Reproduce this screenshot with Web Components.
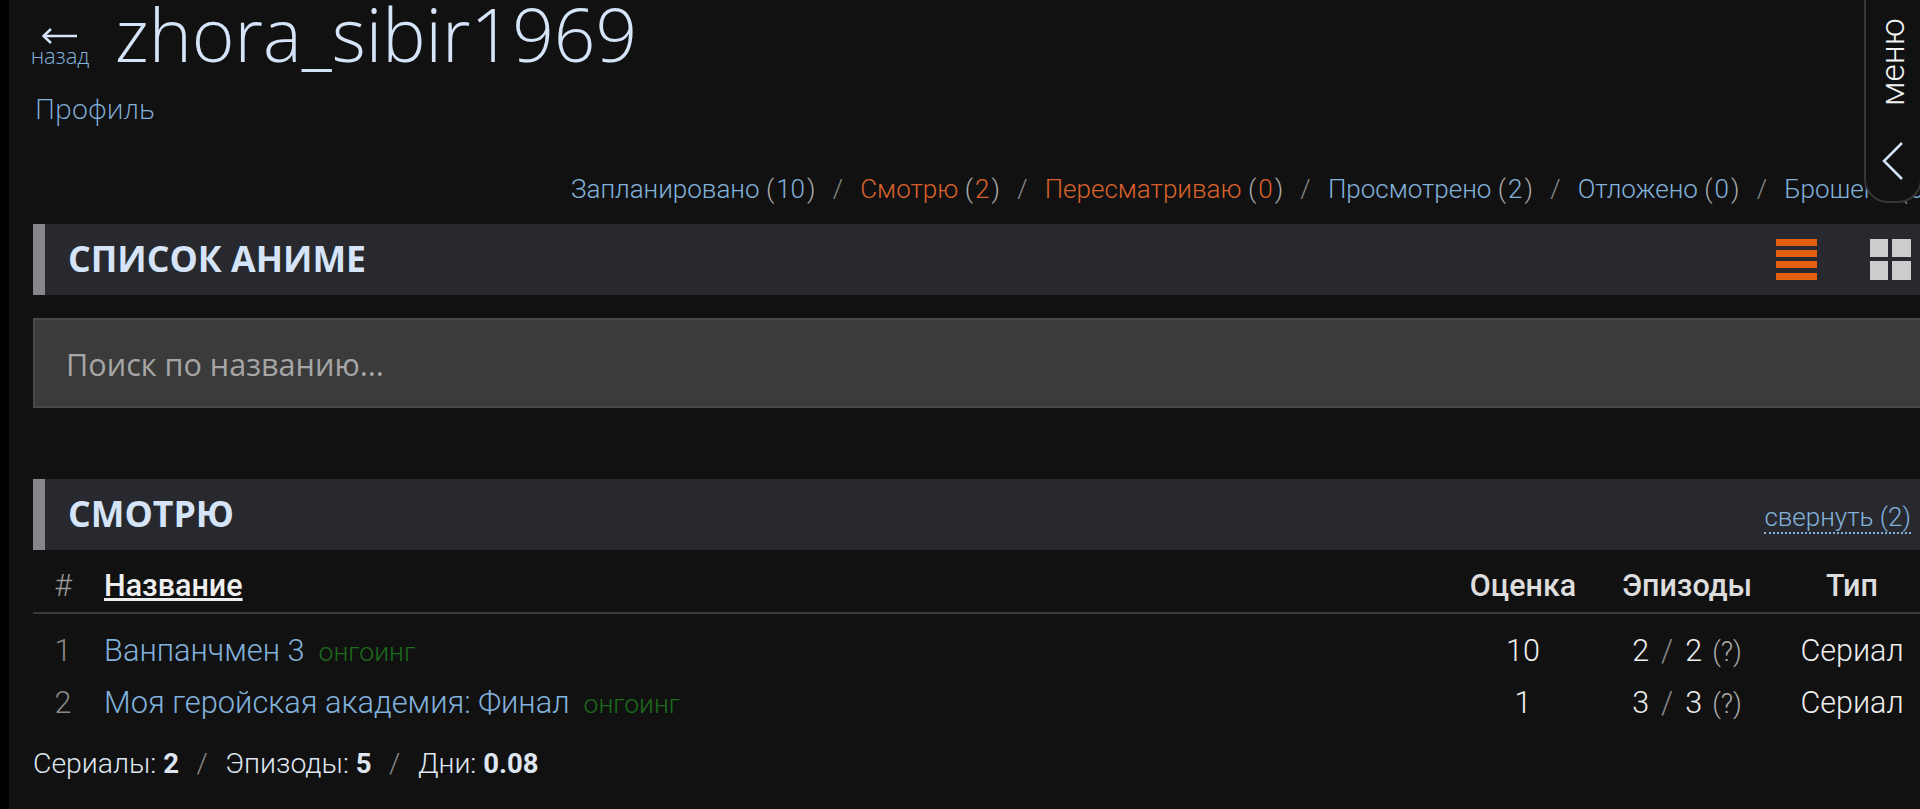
<!DOCTYPE html>
<html lang="ru">
<head>
<meta charset="utf-8">
<title>zhora_sibir1969</title>
<style>
  html, body { margin: 0; height: 100%; overflow: hidden; background: #111; }
  body { font-family: Roboto, "Liberation Sans", sans-serif; font-weight: 300; color: #eee; }
</style>
</head>
<body>
<anime-page>
  <profile-header name="zhora_sibir1969" back="назад" link="Профиль"></profile-header>
  <status-tabs>
    <status-tab count="10">Запланировано</status-tab>
    <status-tab count="2" active>Смотрю</status-tab>
    <status-tab count="0" active>Пересматриваю</status-tab>
    <status-tab count="2">Просмотрено</status-tab>
    <status-tab count="0">Отложено</status-tab>
    <status-tab count="0">Брошено</status-tab>
  </status-tabs>
  <section-bar title="Список аниме"><view-switch></view-switch></section-bar>
  <search-box>Поиск по названию...</search-box>
  <section-bar title="Смотрю" class="second"><collapse-link>свернуть (2)</collapse-link></section-bar>
  <anime-table>
    <anime-row num="1" name="Ванпанчмен 3" score="10" seen="2" total="2"></anime-row>
    <anime-row num="2" name="Моя геройская академия: Финал" score="1" seen="3" total="3"></anime-row>
  </anime-table>
  <list-stats></list-stats>
  <side-menu></side-menu>
</anime-page>

<script>
class AnimePage extends HTMLElement {
  constructor() {
    super();
    this.attachShadow({ mode: 'open' }).innerHTML = `
      <style>
        :host {
          display: block;
          position: relative;
          box-sizing: border-box;
          height: 809px;
          overflow: hidden;
          padding-left: 33px;
          background: #111;
        }
        .strip {
          position: absolute;
          left: 0;
          top: 0;
          bottom: 0;
          width: 9px;
          background: #000;
        }
      </style>
      <div class="strip"></div>
      <slot></slot>
    `;
  }
}

class ProfileHeader extends HTMLElement {
  constructor() {
    super();
    this.attachShadow({ mode: 'open' }).innerHTML = `
      <style>
        :host {
          display: block;
          height: 160px;
          font-family: "Open Sans", sans-serif;
          font-weight: 300;
        }
        .top {
          display: flex;
          align-items: flex-start;
          height: 87px;
        }
        .back {
          display: flex;
          flex-direction: column;
          align-items: center;
          width: 60px;
          margin-left: -3px;
          margin-top: 28px;
          color: #82b1dc;
          font-size: 22px;
          font-weight: 300;
          line-height: 22px;
        }
        .back svg { display: block; }
        h1 {
          margin: 0 0 0 25px;
          font-size: 73px;
          font-weight: 300;
          line-height: 68px;
          color: #d5e4f8;
        }
        .link {
          display: block;
          margin-left: 2px;
          color: #82b1dc;
          font-size: 28px;
          line-height: 42px;
        }
      </style>
      <div class="top">
        <div class="back">
          <svg width="36" height="16" viewBox="0 0 36 16" fill="none" stroke="#d5e4f8" stroke-width="2.5">
            <path d="M1 8H35M9 1L1.5 8L9 15"/>
          </svg>
          <span id="back"></span>
        </div>
        <h1 id="name"></h1>
      </div>
      <a class="link" id="link"></a>
    `;
  }

  connectedCallback() {
    this.shadowRoot.querySelector('#back').textContent = this.getAttribute('back');
    this.shadowRoot.querySelector('#name').textContent = this.getAttribute('name');
    this.shadowRoot.querySelector('#link').textContent = this.getAttribute('link');
  }
}

class StatusTabs extends HTMLElement {
  constructor() {
    super();
    this.attachShadow({ mode: 'open' }).innerHTML = `
      <style>
        :host {
          display: flex;
          height: 64px;
          padding-left: 538px;
          white-space: nowrap;
          font-size: 26px;
          line-height: 58px;
        }
      </style>
      <slot></slot>
    `;
  }
}

class StatusTab extends HTMLElement {
  constructor() {
    super();
    this.attachShadow({ mode: 'open' }).innerHTML = `
      <style>
        :host { display: inline-block; color: #82b1dc; }
        :host([active]) { color: #d9622b; }
        .paren { color: #aaa; }
        #count { margin: 0 2px; }
        .slash { color: #888; margin: 0 17.2px; }
        :host(:last-child) .slash { display: none; }
      </style>
      <slot></slot> <span class="paren">(</span><span id="count"></span><span class="paren">)</span><span class="slash">/</span>
    `;
  }

  connectedCallback() {
    this.shadowRoot.querySelector('#count').textContent = this.getAttribute('count');
  }
}

class SectionBar extends HTMLElement {
  constructor() {
    super();
    this.attachShadow({ mode: 'open' }).innerHTML = `
      <style>
        :host {
          display: flex;
          align-items: center;
          justify-content: space-between;
          box-sizing: border-box;
          height: 71px;
          padding: 0 9px 0 23px;
          background: #28292e;
          border-left: 12px solid #85878b;
        }
        :host(.second) { margin-top: 71px; }
        h2 {
          margin: -3px 0 0;
          font-family: "Open Sans", sans-serif;
          font-size: 35.7px;
          font-weight: 700;
          text-transform: uppercase;
          color: #d5e4f8;
        }
      </style>
      <h2 id="title"></h2>
      <slot></slot>
    `;
  }

  connectedCallback() {
    this.shadowRoot.querySelector('#title').textContent = this.getAttribute('title');
  }
}

class ViewSwitch extends HTMLElement {
  constructor() {
    super();
    this.attachShadow({ mode: 'open' }).innerHTML = `
      <style>
        :host { display: flex; gap: 53px; }
        svg { display: block; }
      </style>
      <svg width="41" height="41" viewBox="0 0 41 41" fill="#e55f10">
        <rect y="0" width="41" height="7"/>
        <rect y="11" width="41" height="7"/>
        <rect y="22" width="41" height="7"/>
        <rect y="34" width="41" height="7"/>
      </svg>
      <svg width="41" height="41" viewBox="0 0 41 41" fill="#ccc">
        <rect x="0" y="0" width="18" height="18"/>
        <rect x="22" y="0" width="19" height="18"/>
        <rect x="0" y="22" width="18" height="19"/>
        <rect x="22" y="22" width="19" height="19"/>
      </svg>
    `;
  }
}

class CollapseLink extends HTMLElement {
  constructor() {
    super();
    this.attachShadow({ mode: 'open' }).innerHTML = `
      <style>
        :host {
          display: block;
          margin-top: 7px;
          color: #82b1dc;
          font-size: 26px;
          line-height: 30px;
          border-bottom: 2px dotted #82b1dc;
        }
      </style>
      <slot></slot>
    `;
  }
}

class SearchBox extends HTMLElement {
  constructor() {
    super();
    this.attachShadow({ mode: 'open' }).innerHTML = `
      <style>
        :host {
          display: block;
          box-sizing: border-box;
          height: 90px;
          margin-top: 23px;
          padding: 0 0 0 31px;
          background: #3b3b3b;
          border: 2px solid #4a4a4a;
          border-right: 0;
          color: #a6a6a6;
          font-family: "Open Sans", sans-serif;
          font-weight: 400;
          font-size: 30.6px;
          line-height: 89px;
        }
      </style>
      <slot></slot>
    `;
  }
}

const COLUMNS = '71px 1352px 134px 194px 136px';

class AnimeTable extends HTMLElement {
  constructor() {
    super();
    this.attachShadow({ mode: 'open' }).innerHTML = `
      <style>
        :host { display: block; font-size: 30.5px; }
        .head {
          display: grid;
          grid-template-columns: ${COLUMNS};
          height: 64px;
          box-sizing: border-box;
          padding-top: 9px;
          border-bottom: 2px solid #3a3a3a;
          align-items: center;
          font-weight: 500;
          color: #ddd;
          text-align: center;
        }
        .num { font-weight: 300; color: #999; padding-right: 11px; }
        .title { text-align: left; text-decoration: underline; color: #eee; }
        .rows { padding-top: 10px; }
      </style>
      <div class="head">
        <span class="num">#</span>
        <span class="title">Название</span>
        <span>Оценка</span>
        <span>Эпизоды</span>
        <span>Тип</span>
      </div>
      <div class="rows"><slot></slot></div>
    `;
  }
}

class AnimeRow extends HTMLElement {
  constructor() {
    super();
    this.attachShadow({ mode: 'open' }).innerHTML = `
      <style>
        :host {
          display: grid;
          grid-template-columns: ${COLUMNS};
          height: 52px;
          align-items: center;
          text-align: center;
          color: #eee;
          font-size: 30.5px;
        }
        .num { color: #888; padding-right: 11px; }
        .name { text-align: left; color: #82b1dc; font-size: 30.8px; }
        .state { margin-left: 14px; color: #1c6b1c; font-size: 26.5px; }
        .slash { color: #888; margin: 0 12px; }
        .q { color: #aaa; font-size: 27px; margin-left: 10px; }
      </style>
      <span class="num" id="num"></span>
      <span class="name"><span id="name"></span><span class="state">онгоинг</span></span>
      <span id="score"></span>
      <span><span id="seen"></span><span class="slash">/</span><span id="total"></span><span class="q">(?)</span></span>
      <span>Сериал</span>
    `;
  }

  connectedCallback() {
    for (const key of ['num', 'name', 'score', 'seen', 'total']) {
      this.shadowRoot.querySelector('#' + key).textContent = this.getAttribute(key);
    }
  }
}

class ListStats extends HTMLElement {
  constructor() {
    super();
    this.attachShadow({ mode: 'open' }).innerHTML = `
      <style>
        :host {
          display: block;
          margin-top: 16px;
          font-size: 28.4px;
          line-height: 40px;
          color: #dfe6f0;
        }
        b { font-weight: 700; font-size: 27.5px; }
        .slash { color: #888; margin: 0 17.5px; }
      </style>
      Сериалы: <b>2</b><span class="slash">/</span>Эпизоды: <b>5</b><span class="slash">/</span>Дни: <b>0.08</b>
    `;
  }
}

class SideMenu extends HTMLElement {
  constructor() {
    super();
    this.attachShadow({ mode: 'open' }).innerHTML = `
      <style>
        :host {
          position: absolute;
          top: -30px;
          right: -2px;
          box-sizing: border-box;
          width: 58px;
          height: 233px;
          display: flex;
          flex-direction: column;
          align-items: center;
          background: #111;
          border: 2px solid #363636;
          border-radius: 24px;
        }
        .label {
          writing-mode: vertical-rl;
          transform: rotate(180deg);
          margin-top: 49px;
          height: 85px;
          line-height: 30px;
          font-family: Roboto, sans-serif;
          font-weight: 300;
          font-size: 33.5px;
          color: #f2f2f2;
        }
        svg { display: block; margin-top: 36px; }
      </style>
      <span class="label">меню</span>
      <svg width="22" height="38" viewBox="0 0 22 38" fill="none" stroke="#d5e4f8" stroke-width="2.5">
        <path d="M20 1L2 19L20 37"/>
      </svg>
    `;
  }
}

customElements.define('anime-page', AnimePage);
customElements.define('profile-header', ProfileHeader);
customElements.define('status-tabs', StatusTabs);
customElements.define('status-tab', StatusTab);
customElements.define('section-bar', SectionBar);
customElements.define('view-switch', ViewSwitch);
customElements.define('collapse-link', CollapseLink);
customElements.define('search-box', SearchBox);
customElements.define('anime-table', AnimeTable);
customElements.define('anime-row', AnimeRow);
customElements.define('list-stats', ListStats);
customElements.define('side-menu', SideMenu);
</script>
</body>
</html>
